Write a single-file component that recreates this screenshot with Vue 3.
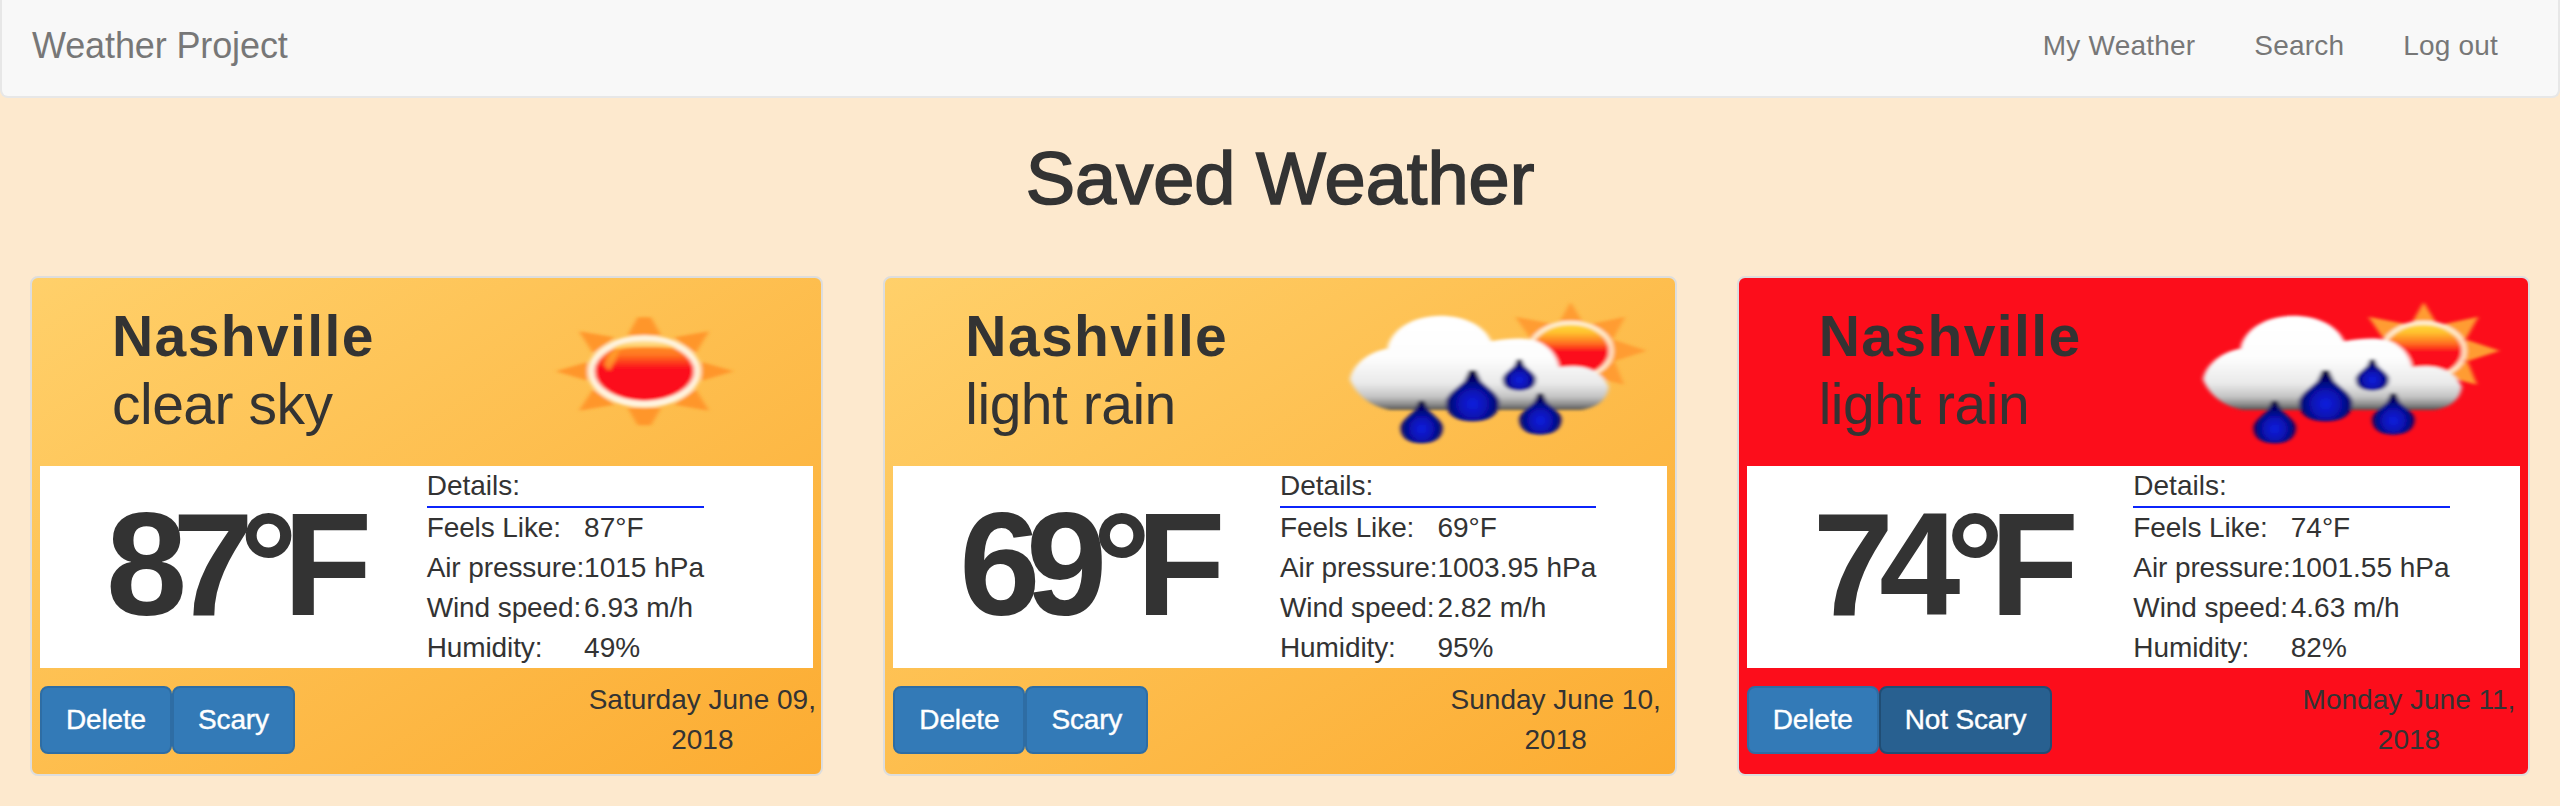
<script setup>
const links = ['My Weather', 'Search', 'Log out']

const cards = [
  {
    city: 'Nashville', sky: 'clear sky', icon: 'sun', temp: '87°F', scary: false,
    details: [['Feels Like:', '87°F'], ['Air pressure:', '1015 hPa'], ['Wind speed:', '6.93 m/h'], ['Humidity:', '49%']],
    date: ['Saturday June 09,', '2018'],
  },
  {
    city: 'Nashville', sky: 'light rain', icon: 'rain', temp: '69°F', scary: false,
    details: [['Feels Like:', '69°F'], ['Air pressure:', '1003.95 hPa'], ['Wind speed:', '2.82 m/h'], ['Humidity:', '95%']],
    date: ['Sunday June 10,', '2018'],
  },
  {
    city: 'Nashville', sky: 'light rain', icon: 'rain', temp: '74°F', scary: true,
    details: [['Feels Like:', '74°F'], ['Air pressure:', '1001.55 hPa'], ['Wind speed:', '4.63 m/h'], ['Humidity:', '82%']],
    date: ['Monday June 11,', '2018'],
  },
]

// Raindrops in icon units: centre x, tip y, bottom y, half width
const drops = [
  [275, 332, 460, 63],
  [428, 240, 394, 80],
  [568, 207, 302, 50],
  [631, 310, 434, 63],
].map(([x, t, b, w]) => {
  const h = b - t
  const m = b - h * 0.37
  return `M${x - w * 0.12} ${t} H${x + w * 0.12} L${x + w * 0.32} ${t + h * 0.22} L${x + w * 0.8} ${t + h * 0.44} Q${x + w} ${m - h * 0.08} ${x + w} ${m} C${x + w} ${b - h * 0.1} ${x + w * 0.55} ${b} ${x} ${b} C${x - w * 0.55} ${b} ${x - w} ${b - h * 0.1} ${x - w} ${m} Q${x - w} ${m - h * 0.08} ${x - w * 0.8} ${t + h * 0.44} L${x - w * 0.32} ${t + h * 0.22}Z`
})
</script>

<template>
  <div class="page">
    <nav class="navbar">
      <a class="brand">Weather Project</a>
      <div class="links"><a v-for="l in links" :key="l">{{ l }}</a></div>
    </nav>
    <h1>Saved Weather</h1>
    <main class="cards">
      <article v-for="(c, i) in cards" :key="i" class="card" :class="{ scary: c.scary }">
        <header class="head">
          <div class="place">
            <div class="city">{{ c.city }}</div>
            <div class="sky">{{ c.sky }}</div>
          </div>
          <svg class="icon" viewBox="0 0 960 510">
            <defs>
              <filter :id="'soft' + i" x="-5%" y="-5%" width="110%" height="110%"><feGaussianBlur stdDeviation="6.5 5.5" /></filter>
              <linearGradient :id="'core' + i" x1="0" y1="0" x2="0" y2="1">
                <stop offset="0" stop-color="#ffdf3c" />
                <stop offset="0.18" stop-color="#ffc02e" />
                <stop offset="0.38" stop-color="#ff6a20" />
                <stop offset="0.52" stop-color="#fc0d1b" />
              </linearGradient>
              <linearGradient :id="'ball' + i" x1="0" y1="0" x2="0" y2="1">
                <stop offset="0" stop-color="#ff9a24" />
                <stop offset="0.24" stop-color="#ff7820" />
                <stop offset="0.46" stop-color="#fc0d1b" />
              </linearGradient>
              <linearGradient :id="'gloss' + i" x1="0" y1="0" x2="0" y2="1">
                <stop offset="0" stop-color="#ffe3a0" />
                <stop offset="1" stop-color="#ffc64a" />
              </linearGradient>
              <linearGradient :id="'cloud' + i" gradientUnits="userSpaceOnUse" x1="0" y1="76" x2="0" y2="360">
                <stop offset="0" stop-color="#fff" />
                <stop offset="0.45" stop-color="#fdfdfd" />
                <stop offset="0.72" stop-color="#e9e9e9" />
                <stop offset="0.86" stop-color="#c4c4c4" />
                <stop offset="0.95" stop-color="#858585" />
                <stop offset="1" stop-color="#505050" />
              </linearGradient>
              <radialGradient :id="'drop' + i" cx="0.5" cy="0.66" r="0.62">
                <stop offset="0" stop-color="#0a1fe0" />
                <stop offset="0.4" stop-color="#0813b4" />
                <stop offset="0.75" stop-color="#03046c" />
                <stop offset="1" stop-color="#02023c" />
              </radialGradient>
            </defs>
            <g v-if="c.icon === 'sun'" transform="translate(190 30)" :filter="`url(#soft${i})`">
              <g fill="#ff962a">
                <path d="M46 214 L142 186 V242Z" /><path d="M580 214 L484 186 V242Z" />
                <path d="M292 52 H332 L362 106 H262Z" /><path d="M292 376 H332 L362 324 H262Z" />
                <path d="M116 94 L222 112 L158 160Z" /><path d="M506 94 L402 112 L466 160Z" />
                <path d="M116 332 L222 314 L158 268Z" /><path d="M506 332 L402 314 L466 268Z" />
              </g>
              <ellipse cx="312" cy="214" rx="159" ry="98" :fill="`url(#ball${i})`" stroke="#fff4e0" stroke-width="20" />
              <path d="M192 194 Q202 158 238 144 L226 180 L206 214Z" fill="#ffa52e" opacity="0.8" />
              <path d="M214 146 C252 114 372 114 410 146 C370 140 270 138 236 148Z" :fill="`url(#gloss${i})`" />
            </g>
            <g v-else :filter="`url(#soft${i})`">
              <g fill="#ff9c30">
                <path d="M686 100 L722 36 L760 100Z" /><path d="M556 80 L668 102 L604 150Z" />
                <path d="M886 80 L784 102 L846 152Z" /><path d="M950 182 L846 148 V216Z" />
                <path d="M882 284 L852 210 L780 258Z" />
              </g>
              <ellipse cx="722" cy="182" rx="122" ry="84" :fill="`url(#core${i})`" stroke="#ffedd0" stroke-width="13" />
              <path
                :fill="`url(#cloud${i})`"
                d="M60 268 C68 222 118 184 172 176 C182 118 250 77 330 77 C404 77 466 108 484 154 C560 140 620 142 652 172 C672 188 682 210 688 232 C750 222 812 234 836 290 C834 330 792 360 740 360 H180 C124 350 78 316 60 268Z"
              />
              <path v-for="(d, k) in drops" :key="k" :d="d" :fill="`url(#drop${i})`" />
            </g>
          </svg>
        </header>
        <section class="body">
          <div class="temp">{{ c.temp }}</div>
          <div class="info">
            <div class="details">
              <div class="caption">Details:</div>
              <template v-for="d in c.details" :key="d[0]">
                <span class="label">{{ d[0] }}</span><span>{{ d[1] }}</span>
              </template>
            </div>
          </div>
        </section>
        <footer class="foot">
          <div class="buttons">
            <button>Delete</button>
            <button :class="{ active: c.scary }">{{ c.scary ? 'Not Scary' : 'Scary' }}</button>
          </div>
          <div class="date"><div v-for="t in c.date" :key="t">{{ t }}</div></div>
        </footer>
      </article>
    </main>
  </div>
</template>

<style>
body {
  background: #fde9ce;
}
</style>

<style scoped>
.page {
  height: 806px;
  overflow: hidden;
  background: #fde9ce;
  color: #333;
  font: 28px/40px "Liberation Sans", Arial, sans-serif;
}
.navbar {
  box-sizing: border-box;
  height: 98px;
  display: flex;
  align-items: center;
  justify-content: space-between;
  padding: 0 60px 4px 30px;
  background: #f8f8f8;
  border: 2px solid #e7e7e7;
  border-top: 0;
  border-radius: 0 0 8px 8px;
  color: #777;
}
.brand {
  font-size: 36px;
  letter-spacing: -0.12px;
}
.links {
  display: flex;
  gap: 59px;
  letter-spacing: 0.2px;
}
h1 {
  margin: 41px 0 0;
  font-size: 74px;
  line-height: 80px;
  font-weight: 400;
  text-align: center;
  -webkit-text-stroke: 1.7px #333;
}
.cards {
  display: grid;
  grid-template-columns: repeat(3, 1fr);
  gap: 60px;
  padding: 57px 30px 0;
}
.card {
  box-sizing: border-box;
  height: 500px;
  border: 2px solid #ddd;
  border-radius: 8px;
  background: linear-gradient(to bottom right, #ffd06a, #fcac32);
}
.card.scary {
  background: #fc0d1b;
}
.head {
  height: 188px;
  display: flex;
  justify-content: space-between;
  box-sizing: border-box;
  padding: 12px 24.6px 0 80px;
}
.place {
  padding-top: 13px;
  font-size: 57px;
  line-height: 67.6px;
}
.city {
  font-weight: 700;
  letter-spacing: 1.4px;
}
.sky {
  letter-spacing: -0.5px;
}
.icon {
  width: 320px;
  height: 170px;
}
.body {
  height: 202px;
  margin: 0 8px;
  display: flex;
  background: #fff;
}
.temp {
  width: 50%;
  box-sizing: border-box;
  padding-left: 66px;
  font-size: 146px;
  line-height: 198px;
  font-weight: 700;
  letter-spacing: -14.6px;
  white-space: nowrap;
}
.info {
  width: 50%;
}
.details {
  display: inline-grid;
  grid-template-columns: auto auto;
  vertical-align: top;
}
.label {
  letter-spacing: -0.1px;
}
.caption {
  grid-column: 1 / 3;
  border-bottom: 2px solid #0b24fb;
}
.foot {
  display: flex;
  justify-content: space-between;
  padding: 12px 0 0 8px;
}
.buttons {
  display: flex;
  padding-top: 6px;
}
button {
  height: 68px;
  padding: 0 24px;
  font: inherit;
  letter-spacing: -0.15px;
  color: #fff;
  background: #337ab7;
  border: 2px solid #2e6da4;
  border-radius: 8px;
  -webkit-text-stroke: 0.4px #fff;
}
button.active {
  background: #286090;
  border-color: #204d74;
}
.date {
  width: 238px;
  text-align: center;
}
</style>
